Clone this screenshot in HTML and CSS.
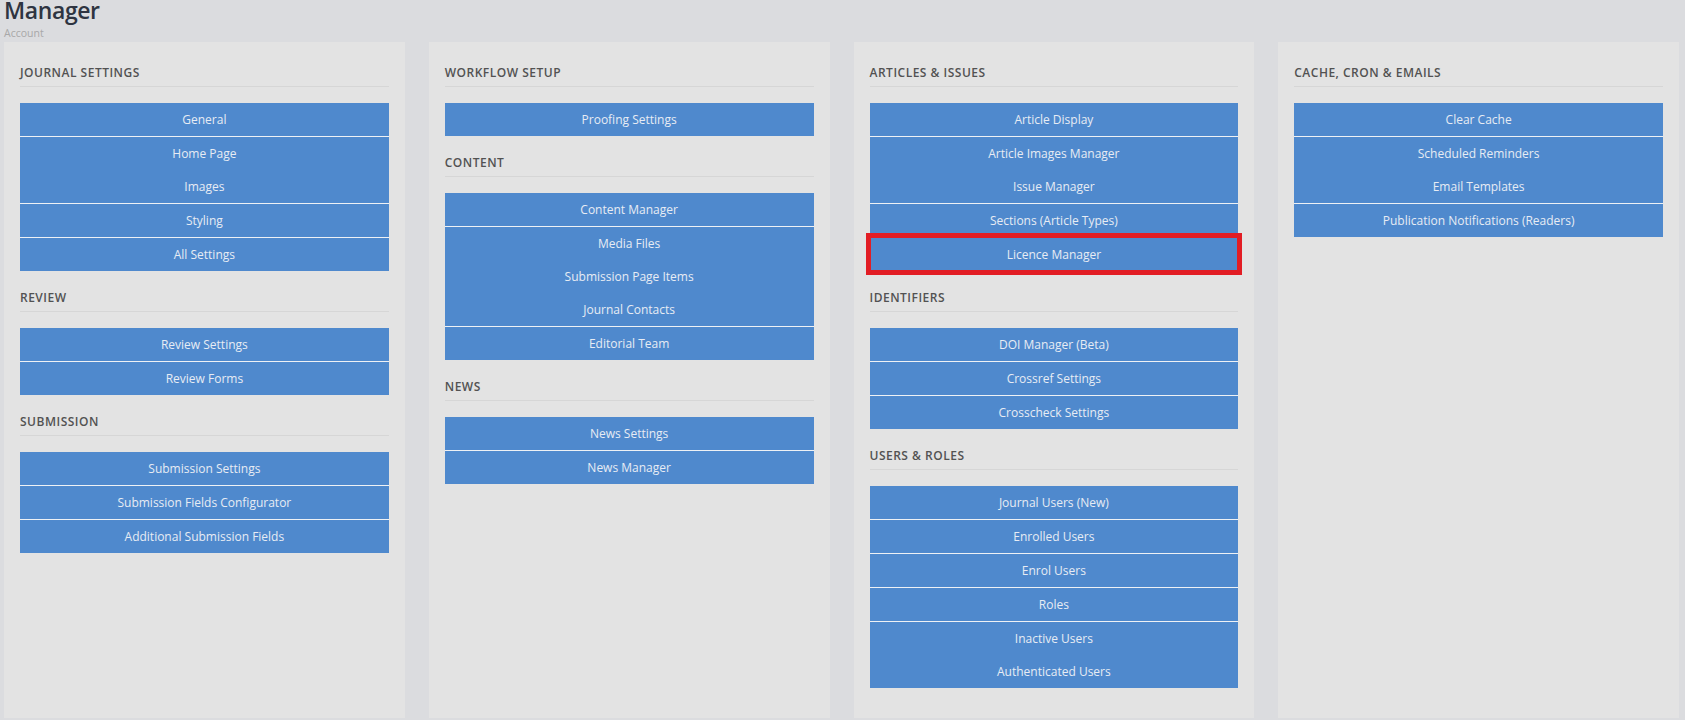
FILE: index.html
```html
<!DOCTYPE html>
<html lang="en">
<head>
  <meta charset="UTF-8">
  <meta name="viewport" content="width=device-width, initial-scale=1.0">
  <title>Manager</title>
  <link rel="stylesheet" href="styles.css">
</head>
<body>
  <header class="page-head">
    <h1>Manager</h1>
    <div class="crumb">Account</div>
  </header>

  <main class="board">
    <!-- column 1 -->
    <section class="card">
      <h4>Journal Settings</h4>
      <div class="links">
        <a href="#">General</a>
        <a href="#">Home Page</a>
        <a href="#" class="joined">Images</a>
        <a href="#">Styling</a>
        <a href="#">All Settings</a>
      </div>

      <h4>Review</h4>
      <div class="links">
        <a href="#">Review Settings</a>
        <a href="#">Review Forms</a>
      </div>

      <h4>Submission</h4>
      <div class="links">
        <a href="#">Submission Settings</a>
        <a href="#">Submission Fields Configurator</a>
        <a href="#">Additional Submission Fields</a>
      </div>
    </section>

    <!-- column 2 -->
    <section class="card">
      <h4>Workflow Setup</h4>
      <div class="links">
        <a href="#">Proofing Settings</a>
      </div>

      <h4>Content</h4>
      <div class="links">
        <a href="#">Content Manager</a>
        <a href="#">Media Files</a>
        <a href="#" class="joined">Submission Page Items</a>
        <a href="#" class="joined">Journal Contacts</a>
        <a href="#">Editorial Team</a>
      </div>

      <h4>News</h4>
      <div class="links">
        <a href="#">News Settings</a>
        <a href="#">News Manager</a>
      </div>
    </section>

    <!-- column 3 -->
    <section class="card">
      <h4>Articles &amp; Issues</h4>
      <div class="links">
        <a href="#">Article Display</a>
        <a href="#">Article Images Manager</a>
        <a href="#" class="joined">Issue Manager</a>
        <a href="#">Sections (Article Types)</a>
        <a href="#" class="marked">Licence Manager</a>
      </div>

      <h4>Identifiers</h4>
      <div class="links">
        <a href="#">DOI Manager (Beta)</a>
        <a href="#">Crossref Settings</a>
        <a href="#">Crosscheck Settings</a>
      </div>

      <h4>Users &amp; Roles</h4>
      <div class="links">
        <a href="#">Journal Users (New)</a>
        <a href="#">Enrolled Users</a>
        <a href="#">Enrol Users</a>
        <a href="#">Roles</a>
        <a href="#">Inactive Users</a>
        <a href="#" class="joined">Authenticated Users</a>
      </div>
    </section>

    <!-- column 4 -->
    <section class="card">
      <h4>Cache, Cron &amp; Emails</h4>
      <div class="links">
        <a href="#">Clear Cache</a>
        <a href="#">Scheduled Reminders</a>
        <a href="#" class="joined">Email Templates</a>
        <a href="#">Publication Notifications (Readers)</a>
      </div>
    </section>
  </main>
</body>
</html>
```

FILE: styles.css
```css
/* Manager dashboard */
body {
  margin: 0;
  background: #dbdcdf;
  font-family: "Open Sans", "Noto Sans", Arial, sans-serif;
  overflow: hidden;
}
.page-head {
  padding: 0 4px;
}
.page-head h1 {
  margin: 0;
  font-size: 23px;
  line-height: 20px;
  font-weight: 600;
  letter-spacing: -0.4px;
  color: #2e3441;
}
.crumb {
  margin-top: 7px;
  font-size: 10.5px;
  line-height: 12px;
  color: #a8a8a8;
}
.board {
  display: grid;
  grid-template-columns: repeat(4, 1fr);
  gap: 24px;
  align-items: stretch;
  padding: 0 6px 0 4px;
  margin-top: 3px;
  height: 676px;
}
.card {
  background: #e3e3e3;
  padding: 22px 16px 29px;
}
.card h4 {
  margin: 0 0 16px;
  padding: 1px 0 5px;
  border-bottom: 1px solid #d6d6d6;
  font-size: 12px;
  line-height: 16px;
  font-weight: 600;
  letter-spacing: 0.5px;
  text-transform: uppercase;
  color: #525252;
}
.links {
  display: flex;
  flex-direction: column;
  margin-bottom: 18px;
}
.links a {
  display: block;
  height: 33px;
  line-height: 33px;
  text-align: center;
  text-decoration: none;
  background: #4f89cd;
  color: #e7ecf4;
  font-size: 12px;
  border-top: 1px solid #eef1f5;
}
.links a:first-child {
  border-top: none;
}
.links a.joined {
  border-top: none;
}
.links a.marked {
  outline: 5px solid #e21d24;
  outline-offset: -1px;
  position: relative;
}
```
